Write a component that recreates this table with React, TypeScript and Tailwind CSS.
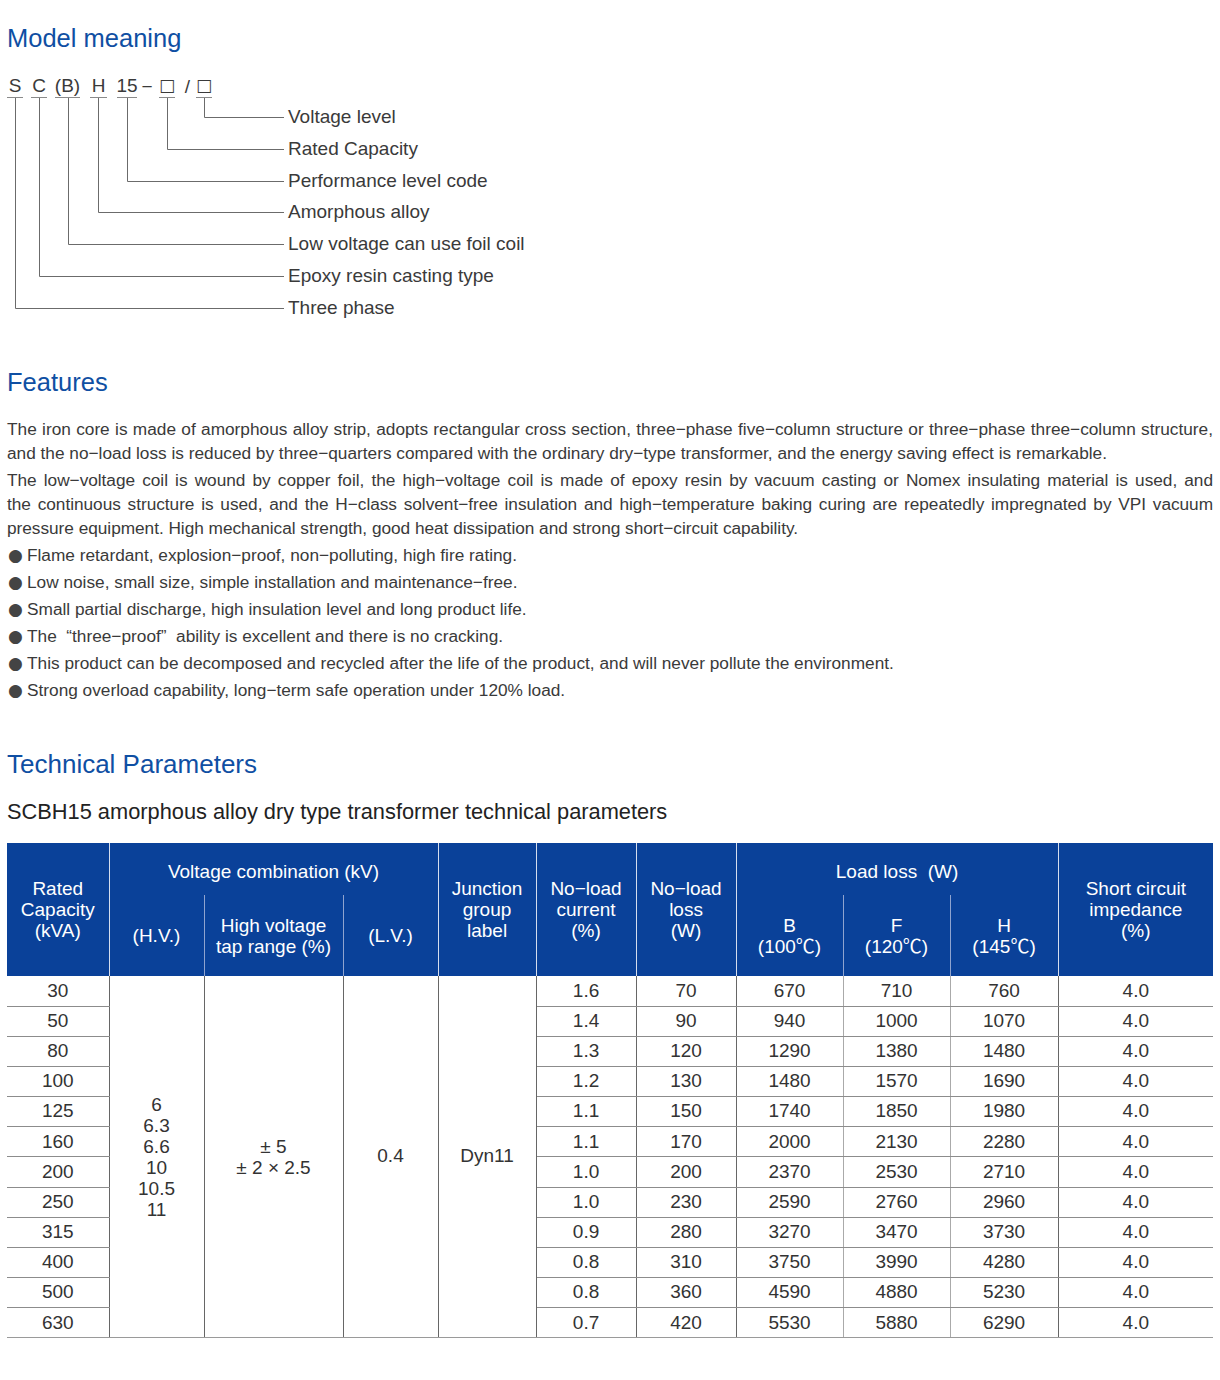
import React from 'react'

const blue = 'text-[#0f4fa3]'

const labels = [
  'Voltage level',
  'Rated Capacity',
  'Performance level code',
  'Amorphous alloy',
  'Low voltage can use foil coil',
  'Epoxy resin casting type',
  'Three phase',
]

// x of each vertical leader, in the order of the labels above
const leaderX = [197, 160, 120, 91, 61, 32, 8]

const bullets = [
  'Flame retardant, explosion−proof, non−polluting, high fire rating.',
  'Low noise, small size, simple installation and maintenance−free.',
  'Small partial discharge, high insulation level and long product life.',
  'The \u00a0“three−proof”\u00a0 ability is excellent and there is no cracking.',
  'This product can be decomposed and recycled after the life of the product, and will never pollute the environment.',
  'Strong overload capability, long−term safe operation under 120% load.',
]

const rows = [
  ['30', '1.6', '70', '670', '710', '760'],
  ['50', '1.4', '90', '940', '1000', '1070'],
  ['80', '1.3', '120', '1290', '1380', '1480'],
  ['100', '1.2', '130', '1480', '1570', '1690'],
  ['125', '1.1', '150', '1740', '1850', '1980'],
  ['160', '1.1', '170', '2000', '2130', '2280'],
  ['200', '1.0', '200', '2370', '2530', '2710'],
  ['250', '1.0', '230', '2590', '2760', '2960'],
  ['315', '0.9', '280', '3270', '3470', '3730'],
  ['400', '0.8', '310', '3750', '3990', '4280'],
  ['500', '0.8', '360', '4590', '4880', '5230'],
  ['630', '0.7', '420', '5530', '5880', '6290'],
]

function Token({ children, className = '' }: { children: React.ReactNode; className?: string }) {
  return (
    <span className={`h-[24px] flex items-center justify-center border-b border-[#8a8a8a] ${className}`}>
      {children}
    </span>
  )
}

function ModelDiagram() {
  return (
    <div className="relative h-[250px] text-[19px] text-[#3a3a3a]">
      <svg className="absolute left-0 top-0" width="300" height="250">
        {leaderX.map((x, i) => {
          const y = Math.round(43 + 31.8 * i) + 0.5
          return (
            <polyline
              key={i}
              points={`${x + 0.5},24 ${x + 0.5},${y} 277,${y}`}
              fill="none"
              stroke="#6b6b6b"
              strokeWidth="1"
            />
          )
        })}
      </svg>
      <div className="flex items-start leading-none">
        <Token className="w-[16px]">S</Token>
        <Token className="w-[16px] ml-[8px]">C</Token>
        <Token className="w-[25px] ml-[8px]">(B)</Token>
        <Token className="w-[17px] ml-[10px]">H</Token>
        <Token className="w-[20px] ml-[10px]">15</Token>
        <span className="h-[24px] w-[10px] ml-[5px] flex items-center justify-center">−</span>
        <Token className="w-[16px] ml-[7px] font-['DejaVu_Sans',sans-serif] text-[17px]">□</Token>
        <span className="h-[24px] w-[5px] ml-[10px] flex items-center justify-center">/</span>
        <Token className="w-[16px] ml-[6px] font-['DejaVu_Sans',sans-serif] text-[17px]">□</Token>
      </div>
      <div className="mt-[3px] pl-[281px] flex flex-col leading-[31.8px]">
        {labels.map((l) => (
          <div key={l}>{l}</div>
        ))}
      </div>
    </div>
  )
}

const th = 'font-normal text-white align-middle text-center leading-[21px]'
const hLine = 'border-r border-[#d5ddee]'
const hSub = 'border-r border-[#8fa3cf]'
const td = 'h-[30.17px] text-center align-middle'
const rowLine = 'border-b border-[#8c8c8c]'

function ParamTable() {
  return (
    <table className="w-[1206px] table-fixed border-collapse text-[19px]">
      <colgroup>
        <col className="w-[102px]" />
        <col className="w-[95px]" />
        <col className="w-[139px]" />
        <col className="w-[95px]" />
        <col className="w-[98px]" />
        <col className="w-[100px]" />
        <col className="w-[100px]" />
        <col className="w-[107px]" />
        <col className="w-[107px]" />
        <col className="w-[108px]" />
        <col className="w-[155px]" />
      </colgroup>
      <thead className="bg-[#0a4199]">
        <tr className="h-[52px]">
          <th rowSpan={2} className={`${th} ${hLine}`}>
            Rated<br />Capacity<br />(kVA)
          </th>
          <th colSpan={3} className={`${th} ${hLine} pt-[4px]`}>
            Voltage combination (kV)
          </th>
          <th rowSpan={2} className={`${th} ${hLine}`}>
            Junction<br />group<br />label
          </th>
          <th rowSpan={2} className={`${th} ${hLine}`}>
            No−load<br />current<br />(%)
          </th>
          <th rowSpan={2} className={`${th} ${hLine}`}>
            No−load<br />loss<br />(W)
          </th>
          <th colSpan={3} className={`${th} ${hLine} pt-[4px]`}>
            Load loss&nbsp; (W)
          </th>
          <th rowSpan={2} className={th}>
            Short circuit<br />impedance<br />(%)
          </th>
        </tr>
        <tr className="h-[81px]">
          <th className={`${th} ${hSub}`}>(H.V.)</th>
          <th className={`${th} ${hSub}`}>
            High voltage<br />tap range (%)
          </th>
          <th className={`${th} ${hLine}`}>(L.V.)</th>
          <th className={`${th} ${hSub}`}>
            B<br />(100℃)
          </th>
          <th className={`${th} ${hSub}`}>
            F<br />(120℃)
          </th>
          <th className={`${th} ${hLine}`}>
            H<br />(145℃)
          </th>
        </tr>
      </thead>
      <tbody className="text-[#333]">
        {rows.map((r, i) => {
          const last = i === rows.length - 1
          const line = last ? 'border-b border-[#9a9a9a]' : rowLine
          return (
            <tr key={r[0]}>
              <td className={`${td} ${line} border-r border-r-[#666]`}>{r[0]}</td>
              {i === 0 && (
                <>
                  <td rowSpan={12} className="text-center align-middle leading-[21px] border-r border-[#666] border-b border-b-[#9a9a9a]">
                    6<br />6.3<br />6.6<br />10<br />10.5<br />11
                  </td>
                  <td rowSpan={12} className="text-center align-middle leading-[21px] border-r border-[#666] border-b border-b-[#9a9a9a]">
                    ± 5<br />± 2 × 2.5
                  </td>
                  <td rowSpan={12} className="text-center align-middle border-r border-[#666] border-b border-b-[#9a9a9a]">
                    0.4
                  </td>
                  <td rowSpan={12} className="text-center align-middle border-r border-[#666] border-b border-b-[#9a9a9a]">
                    Dyn11
                  </td>
                </>
              )}
              <td className={`${td} ${line} border-r border-r-[#666]`}>{r[1]}</td>
              <td className={`${td} ${line} border-r border-r-[#666]`}>{r[2]}</td>
              <td className={`${td} ${line} border-r border-r-[#aaa]`}>{r[3]}</td>
              <td className={`${td} ${line} border-r border-r-[#aaa]`}>{r[4]}</td>
              <td className={`${td} ${line} border-r border-r-[#666]`}>{r[5]}</td>
              <td className={`${td} ${line}`}>4.0</td>
            </tr>
          )
        })}
      </tbody>
    </table>
  )
}

export default function App() {
  return (
    <div className="w-[1220px] min-h-[1380px] bg-white px-[7px] pt-[23px] font-['Liberation_Sans','Noto_Sans_CJK_SC',sans-serif] text-[#3a3a3a]">
      <h2 className={`text-[25.5px] leading-[30px] ${blue}`}>Model meaning</h2>
      <div className="mt-[21px]">
        <ModelDiagram />
      </div>

      <h2 className={`mt-[43px] text-[25.5px] leading-[30px] ${blue}`}>Features</h2>
      <div className="mt-[20px] text-[17.25px] leading-[24px] text-justify">
        <p className="mb-[3px]">
          The iron core is made of amorphous alloy strip, adopts rectangular cross section, three−phase five−column
          structure or three−phase three−column structure, and the no−load loss is reduced by three−quarters compared
          with the ordinary dry−type transformer, and the energy saving effect is remarkable.
        </p>
        <p className="mb-[3px] tracking-[-0.03px]">
          The low−voltage coil is wound by copper foil, the high−voltage coil is made of epoxy resin by vacuum casting
          or Nomex insulating material is used, and the{'\u00a0'}continuous structure is used, and the H−class solvent−free
          insulation and high−temperature baking curing are repeatedly impregnated by VPI vacuum pressure equipment.
          High mechanical strength, good heat dissipation and strong short−circuit capability.
        </p>
        {bullets.map((b) => (
          <p key={b} className="mb-[3px] text-left flex items-center">
            <span className="w-[20px] pl-[1px] text-[#444] font-['DejaVu_Sans',sans-serif] text-[17px] leading-[24px]">●</span>
            <span>{b}</span>
          </p>
        ))}
      </div>

      <h2 className={`mt-[47px] text-[26px] leading-[30px] ${blue}`}>Technical Parameters</h2>
      <p className="mt-[20px] text-[21.8px] leading-[26px] text-[#222]">
        SCBH15 amorphous alloy dry type transformer technical parameters
      </p>
      <div className="mt-[18px]">
        <ParamTable />
      </div>
    </div>
  )
}
